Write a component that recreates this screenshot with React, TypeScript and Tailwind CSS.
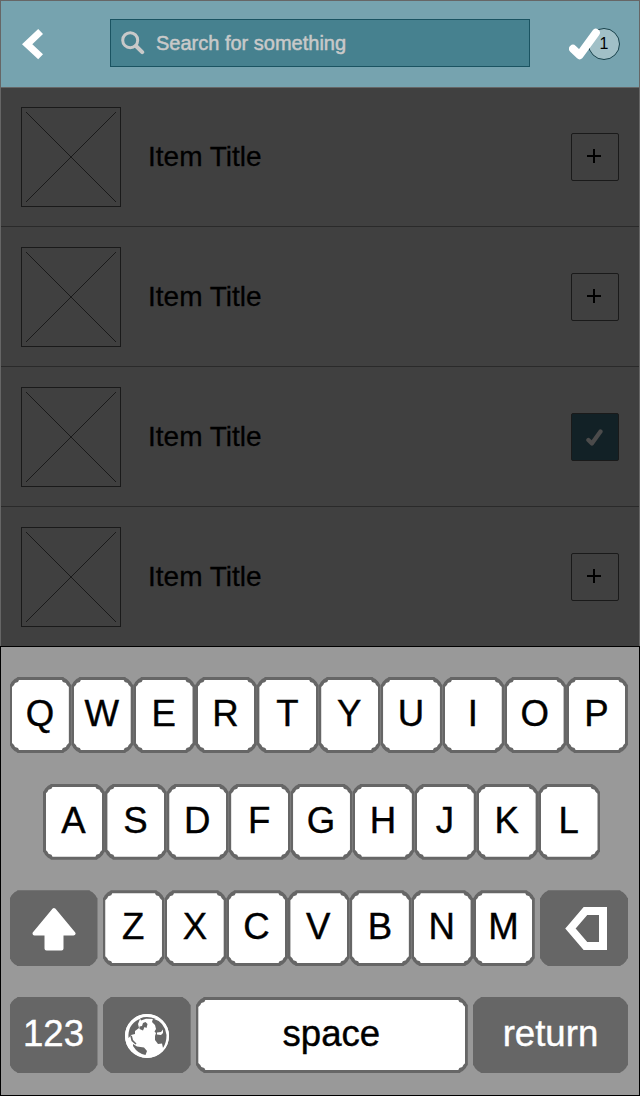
import type { ReactNode } from "react";

const outerShape =
  "[clip-path:polygon(8px_0,calc(100%_-_8px)_0,calc(100%_-_7px)_1px,calc(100%_-_5px)_2px,calc(100%_-_2px)_5px,calc(100%_-_1px)_7px,100%_8px,100%_calc(100%_-_8px),calc(100%_-_1px)_calc(100%_-_7px),calc(100%_-_2px)_calc(100%_-_5px),calc(100%_-_5px)_calc(100%_-_2px),calc(100%_-_7px)_calc(100%_-_1px),calc(100%_-_8px)_100%,8px_100%,7px_calc(100%_-_1px),5px_calc(100%_-_2px),2px_calc(100%_-_5px),1px_calc(100%_-_7px),0_calc(100%_-_8px),0_8px,1px_7px,2px_5px,5px_2px,7px_1px)]";
const innerShape =
  "[clip-path:polygon(7px_0,calc(100%_-_7px)_0,calc(100%_-_6px)_2px,calc(100%_-_3px)_3px,calc(100%_-_2px)_5px,100%_7px,100%_calc(100%_-_7px),calc(100%_-_2px)_calc(100%_-_5px),calc(100%_-_3px)_calc(100%_-_3px),calc(100%_-_6px)_calc(100%_-_2px),calc(100%_-_7px)_100%,7px_100%,6px_calc(100%_-_2px),3px_calc(100%_-_3px),2px_calc(100%_-_5px),0_calc(100%_-_7px),0_7px,2px_5px,3px_3px,6px_2px)]";

function Key({ children, className = "flex-1" }: { children: ReactNode; className?: string }) {
  return (
    <div className={`h-[76px] bg-[#666] px-[2.5px] py-[3px] ${outerShape} ${className}`}>
      <div className={`flex h-full items-center justify-center bg-white pr-[1px] pb-[1.5px] text-[36.6px] leading-none text-black [-webkit-text-stroke:0.4px_black] ${innerShape}`}>
        {children}
      </div>
    </div>
  );
}

function DarkKey({ children, className = "w-[88px]" }: { children: ReactNode; className?: string }) {
  return (
    <div className={`flex h-[76px] items-center justify-center bg-[#666] pb-[1.5px] text-[36.6px] leading-none text-white [-webkit-text-stroke:0.4px_white] ${outerShape} ${className}`}>
      {children}
    </div>
  );
}

function Check({ className }: { className: string }) {
  return (
    <svg viewBox="0 0 31 32" className={className} fill="none" stroke="currentColor" strokeWidth="8" strokeLinecap="round" strokeLinejoin="round">
      <path d="M4 20.8 L10.6 27.2 L26.8 4.8" />
    </svg>
  );
}

function Row({ checked, first, last }: { checked?: boolean; first?: boolean; last?: boolean }) {
  return (
    <div className={`flex items-end border-[#2a2a2a] px-5 pb-[19px] ${first || last ? "h-[139px]" : "h-[140px]"} ${last ? "" : "border-b"}`}>
      <svg className="size-[100px]" viewBox="0 0 100 100" fill="none" stroke="#1a1a1a">
        <rect x=".5" y=".5" width="99" height="99" />
        <path d="M5 5 L95 95 M95 5 L5 95" />
      </svg>
      <div className="flex h-[100px] flex-1 items-center pl-[27px]">
        <span className="flex-1 text-[28px] leading-8 text-black [-webkit-text-stroke:0.3px_black]">Item Title</span>
        <div className={`flex size-12 items-center justify-center rounded-[2px] border border-[#1a1a1a] ${checked ? "bg-[#122126] text-[#4b4b4b]" : "text-black"}`}>
          {checked ? (
            <Check className="mr-[1px] h-[17px] w-[17px]" />
          ) : (
            <svg className="mr-[2px] mb-[2px] size-[14px]" viewBox="0 0 14 14" stroke="currentColor" strokeWidth="2">
              <path d="M0 7H14M7 0V14" />
            </svg>
          )}
        </div>
      </div>
    </div>
  );
}

function Globe() {
  return (
    <svg className="mt-[3px] ml-[1px] size-11" viewBox="0 0 44 44">
      <circle cx="22" cy="22" r="22" fill="#fff" />
      <g fill="#666">
        <path d="M13.5 5.5 L15 5 L13 10 L14 14 L10 17 L10 20 L6 21 L4.5 23 L3.5 24 Q2.5 11 13.5 5.5Z" />
        <path d="M15 4.5 Q22 1.5 31 5 L21 4.8 L16 6.5Z" />
        <path d="M18 9 L20.5 8 L22.5 10 L21.5 14 L19.5 13 L18 16.5 L14.5 15 L14.5 12.5 L17 12Z" />
        <path d="M5 21 L7 22 L8 26 L11.5 29.5 L10.5 30.5 L6.5 27Z" />
        <path d="M8 30 L12 32.5 L19 33.5 L22 37 L20.5 41 Q13 40 8 32Z" />
        <path d="M28 4.5 Q40 8 41.5 21 Q41.5 29 38 34 L37 29.5 L33 30 L30 26 L30 22 L31 19 L29.5 17.5 L31 15 L30 11 L27 8Z" />
      </g>
      <path fill="#fff" d="M32 18.5 L36 18 L38 15.5 L38 19 L36 21 L32 20.5Z" />
      <circle cx="22" cy="22" r="21.2" fill="none" stroke="#fff" strokeWidth="1.6" />
    </svg>
  );
}

export default function App() {
  return (
    <div className="flex h-[1096px] w-[640px] flex-col overflow-hidden bg-[#404040] font-['Liberation_Sans',sans-serif]">
      <header className="flex h-[88px] items-center border border-[#666] bg-[#76a3af] pr-[19px] pl-5">
        <svg className="h-8 w-[23px]" viewBox="0 0 23 32" fill="#fff">
          <path d="M17.2 1 L22 6 L11.3 16.2 L22 26.3 L17.2 31.3 L1 16.2Z" />
        </svg>
        <div className="mb-[2px] ml-[66px] flex h-12 w-[420px] items-center border border-[#1a5361] bg-[#46818f] pl-[10px] text-[#c9c9c9]">
          <svg className="size-6" viewBox="0 0 24 24" fill="none" stroke="currentColor">
            <circle cx="9.2" cy="9.2" r="7.5" strokeWidth="3" />
            <path d="M15 15 L21.2 21.2" strokeWidth="4" strokeLinecap="round" />
          </svg>
          <span className="ml-[11px] text-[20px] leading-6 [-webkit-text-stroke:0.5px_#c9c9c9]">Search for something</span>
        </div>
        <div className="relative ml-auto flex h-8 w-[51px] justify-end">
          <div className="flex size-8 items-center justify-center rounded-full border border-[#17414b] bg-[#a1c0c7] text-[16px] text-black">1</div>
          <Check className="absolute top-0 left-0 h-8 w-[31px] text-white" />
        </div>
      </header>

      <main className="h-[558px] border-x border-[#666]">
        <Row first />
        <Row />
        <Row checked />
        <Row last />
      </main>

      <section className="flex h-[450px] flex-col gap-[30.67px] border border-black bg-[#999] pt-[30px] pr-[11px] pl-[8.5px]">
        <div className="flex">
          {"QWERTYUIOP".split("").map((k) => <Key key={k}>{k}</Key>)}
        </div>
        <div className="flex pr-[28px] pl-[33.5px]">
          {"ASDFGHJKL".split("").map((k) => <Key key={k}>{k}</Key>)}
        </div>
        <div className="flex justify-between">
          <DarkKey>
            <svg className="mt-[2px] size-11" viewBox="0 0 44 44" fill="#fff" stroke="#fff" strokeWidth="4" strokeLinejoin="round">
              <path d="M22 3 L41.5 26.5 H29.5 V41.5 H14.5 V26.5 H2.5Z" />
            </svg>
          </DarkKey>
          <div className="flex w-[432px]">
            {"ZXCVBNM".split("").map((k) => <Key key={k}>{k}</Key>)}
          </div>
          <DarkKey>
            <svg className="mt-[2px] ml-1 h-[43px] w-[42px]" viewBox="0 0 42 43" fill="none" stroke="#fff" strokeWidth="8">
              <path d="M5.5 21.5 L20.5 4 H38 V39 H20.5Z" />
            </svg>
          </DarkKey>
        </div>
        <div className="flex justify-between">
          <DarkKey>123</DarkKey>
          <DarkKey><Globe /></DarkKey>
          <Key className="w-[272px]">space</Key>
          <DarkKey className="w-[155px]">return</DarkKey>
        </div>
      </section>
    </div>
  );
}
